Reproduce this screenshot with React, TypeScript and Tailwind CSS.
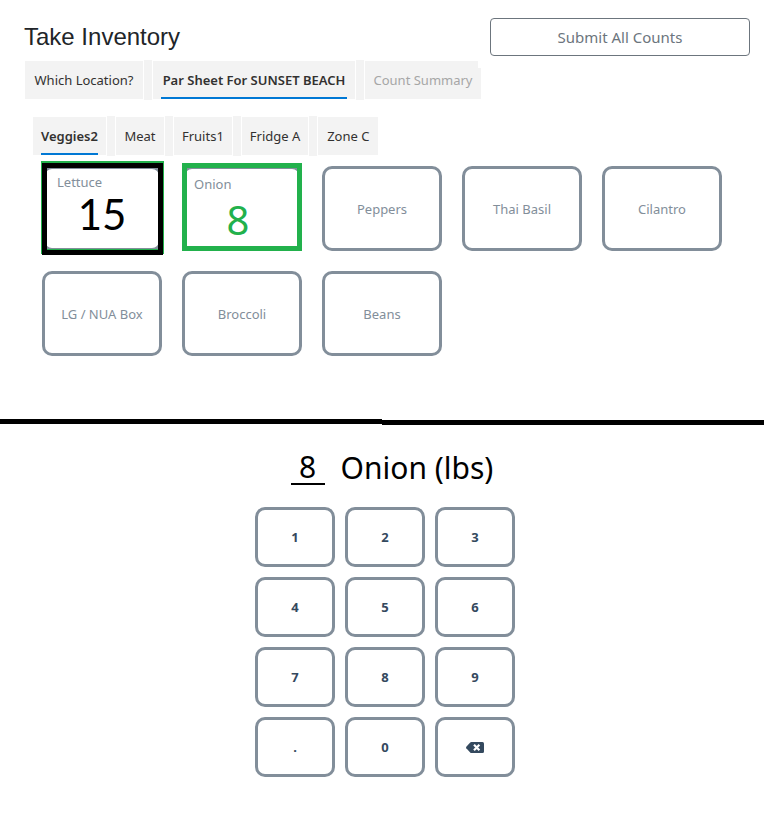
import { Fragment, useState } from "react";

type Tab = { name: string; disabled?: boolean; size?: string };

const pages: Tab[] = [
  { name: "Which Location?", size: "min-w-[118px]" },
  { name: "Par Sheet For SUNSET BEACH", size: "min-w-[202px]" },
  { name: "Count Summary", disabled: true, size: "min-w-[116px]" },
];

const zones: Tab[] = [
  { name: "Veggies2" },
  { name: "Meat", size: "min-w-12" },
  { name: "Fruits1" },
  { name: "Fridge A" },
  { name: "Zone C", size: "min-w-[60px]" },
];

const pending = ["Peppers", "Thai Basil", "Cilantro", "LG / NUA Box", "Broccoli", "Beans"];
const keys = ["1", "2", "3", "4", "5", "6", "7", "8", "9", ".", "0"];

function Tabs({ tabs, initial, label }: { tabs: Tab[]; initial: string; label: string }) {
  const [active, setActive] = useState(initial);
  return (
    <div role="tablist" aria-label={label} className="flex items-center gap-px">
      {tabs.map((tab, i) => (
        <Fragment key={tab.name}>
          {i > 0 && <span className="h-10 w-2 bg-[#f3f3f3]" />}
          <button
            role="tab"
            aria-selected={active === tab.name}
            disabled={tab.disabled}
            onClick={() => setActive(tab.name)}
            className={`relative h-[38px] bg-[#f3f3f3] px-2 text-[13px] whitespace-nowrap text-[#323130] disabled:text-[#a6a6a6] ${tab.size ?? ""}`}
          >
            <span
              className={
                active === tab.name
                  ? "flex h-full items-center justify-center border-b-2 border-[#0078d4] pt-1 font-semibold"
                  : "flex h-full items-center justify-center pt-0.5"
              }
            >
              {tab.name}
            </span>
            {tab.disabled && <span className="absolute top-0 right-0 h-[7px] w-[3px] bg-white" />}
          </button>
        </Fragment>
      ))}
    </div>
  );
}

const card =
  "relative h-[85px] w-[120px] rounded-[10px] border-3 border-[#828e9a] bg-white text-[13px] text-[#828e9a]";

export default function App() {
  const [count, setCount] = useState("8");

  return (
    <main className="bg-white font-['Noto_Sans','Open_Sans',sans-serif]">
      <section className="pt-[18px] pr-[14px] pl-6">
        <header className="flex justify-between">
          <h1 className="font-['Liberation_Sans',Arial,sans-serif] text-2xl leading-[38px] text-[#212529]">
            Take Inventory
          </h1>
          <button className="h-[38px] w-[260px] rounded border border-[#6c757d] text-[15px] text-[#6c757d]">
            Submit All Counts
          </button>
        </header>
        <div className="mt-1 pl-px">
          <Tabs tabs={pages} initial="Par Sheet For SUNSET BEACH" label="Pages" />
        </div>
        <div className="mt-4 pl-[9px]">
          <Tabs tabs={zones} initial="Veggies2" label="Zones" />
        </div>
        <div className="mt-[10px] flex flex-wrap gap-5 pl-[18px]">
          <button className={card}>
            <span className="absolute -top-2 -right-[5px] -bottom-1.5 -left-1 border-5 border-[#22b14c]" />
            <span className="absolute -top-1.5 -right-1 -bottom-[7px] -left-[3px] border-5 border-black" />
            <span className="flex h-full flex-col pt-1">
              <span className="pl-3 text-left leading-[18px]">Lettuce</span>
              <span className="text-center font-[Lato,sans-serif] text-[42px] leading-[46px] text-black">15</span>
            </span>
          </button>
          <button className={card}>
            <span className="absolute -top-1.5 -right-[3px] -bottom-[3px] -left-[3px] border-5 border-[#22b14c]" />
            <span className="flex h-full flex-col pt-1.5">
              <span className="pl-[9px] text-left leading-[18px]">Onion</span>
              <span className="pt-1 pr-2 text-center text-[40px] leading-[46px] text-[#22b14c]">8</span>
            </span>
          </button>
          {pending.map((name) => (
            <button key={name} className={`${card} pt-0.5`}>
              {name}
            </button>
          ))}
        </div>
      </section>

      <div className="mt-[63px] flex items-start">
        <span className="h-[5px] flex-1 bg-black" />
        <span className="mt-px h-[5px] flex-1 bg-black" />
      </div>

      <section className="flex flex-col items-center pt-6 pr-[14px] pb-9 pl-5">
        <div className="flex items-start gap-4 pl-[14px] text-[30px] leading-[38px] text-black">
          <input
            id="count"
            value={count}
            onChange={(e) => setCount(e.target.value)}
            className="h-9 w-[34px] border-b-2 border-black pt-0.5 text-center outline-none"
          />
          <label htmlFor="count">Onion (lbs)</label>
        </div>
        <div className="mt-5 grid grid-cols-3 gap-2.5 text-[13px] font-bold text-[#34495e]">
          {keys.map((k) => (
            <button
              key={k}
              onClick={() => setCount(count + k)}
              className="h-[60px] w-20 rounded-[10px] border-3 border-[#828e9a] pt-0.5"
            >
              {k}
            </button>
          ))}
          <button
            aria-label="Delete"
            onClick={() => setCount(count.slice(0, -1))}
            className="flex h-[60px] w-20 items-center justify-center rounded-[10px] border-3 border-[#828e9a]"
          >
            <svg viewBox="0 0 18 11" className="h-[11px] w-[18px]">
              <path
                d="M5.3 0H16.5Q18 0 18 1.5V9.500Q18 11 16.500 11H5.300Q4.700 11 4.200 10.500L0.300 6.200Q-0.200 5.500 0.300 4.800L4.200 0.500Q4.700 0 5.300 0Z"
                fill="#34495e"
              />
              <path d="M8 2.800L13.400 8.200M13.400 2.800L8 8.200" stroke="white" strokeWidth="2.200" />
            </svg>
          </button>
        </div>
      </section>
    </main>
  );
}
